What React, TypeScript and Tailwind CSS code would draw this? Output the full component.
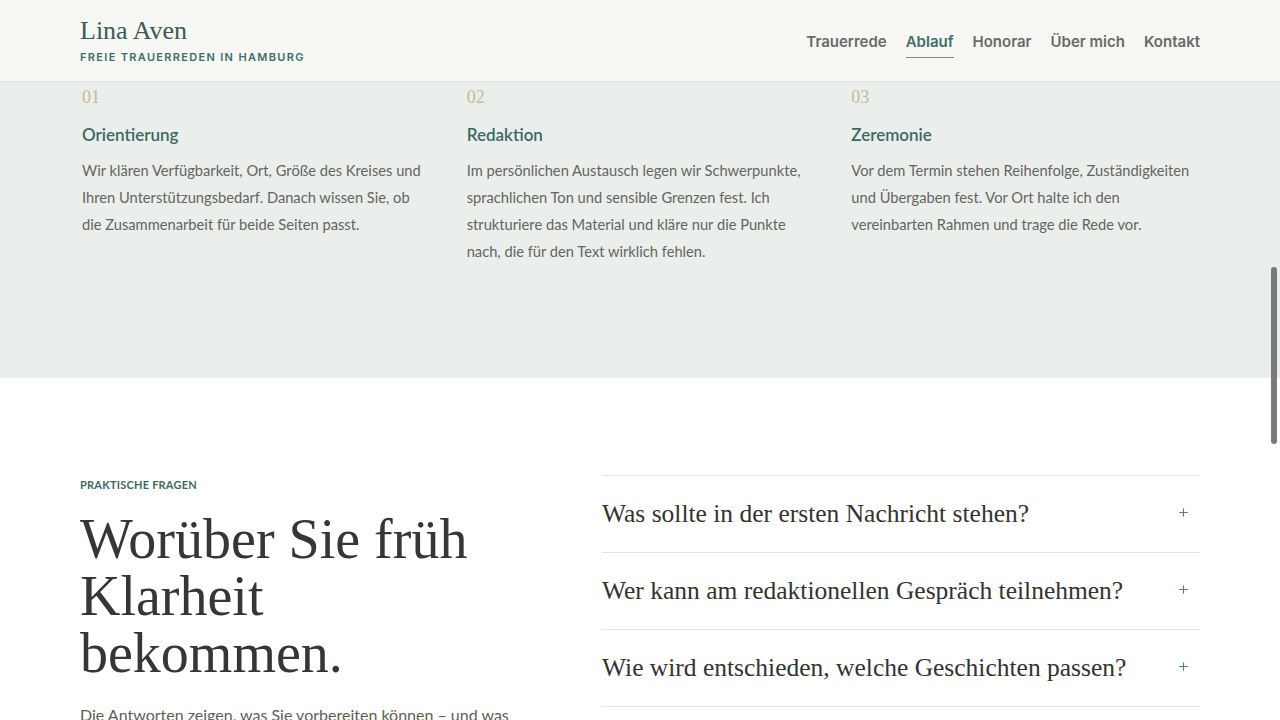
import { Plus } from "lucide-react";

const steps = [
  {
    no: "01",
    title: "Orientierung",
    lines: [
      "Wir klären Verfügbarkeit, Ort, Größe des Kreises und",
      "Ihren Unterstützungsbedarf. Danach wissen Sie, ob",
      "die Zusammenarbeit für beide Seiten passt.",
    ],
  },
  {
    no: "02",
    title: "Redaktion",
    lines: [
      "Im persönlichen Austausch legen wir Schwerpunkte,",
      "sprachlichen Ton und sensible Grenzen fest. Ich",
      "strukturiere das Material und kläre nur die Punkte",
      "nach, die für den Text wirklich fehlen.",
    ],
  },
  {
    no: "03",
    title: "Zeremonie",
    lines: [
      "Vor dem Termin stehen Reihenfolge, Zuständigkeiten",
      "und Übergaben fest. Vor Ort halte ich den",
      "vereinbarten Rahmen und trage die Rede vor.",
    ],
  },
];

const questions = [
  "Was sollte in der ersten Nachricht stehen?",
  "Wer kann am redaktionellen Gespräch teilnehmen?",
  "Wie wird entschieden, welche Geschichten passen?",
];

const nav = ["Trauerrede", "Ablauf", "Honorar", "Über mich", "Kontakt"];

export default function App() {
  return (
    <div className="h-screen overflow-hidden bg-white font-['Lato','Noto_Sans',sans-serif] relative">
      <header className="h-[82px] bg-[#f7f7f3] border-b border-[#e4e7e3]">
        <div className="max-w-[1120px] mx-auto h-full flex items-center justify-between">
          <div className="pt-[1px]">
            <div className="font-['Liberation_Serif',serif] text-[26px] leading-[30px] text-[#3e5957]">
              Lina Aven
            </div>
            <div className="mt-[3px] font-['Inter',sans-serif] text-[11px] font-semibold tracking-[0.12em] text-[#3f6e6c]">
              FREIE TRAUERREDEN IN HAMBURG
            </div>
          </div>
          <nav className="flex items-center gap-[19px] pt-[3px] font-['Inter',sans-serif] text-[15px] font-semibold">
            {nav.map((n) => (
              <a
                key={n}
                className={
                  n === "Ablauf"
                    ? "text-[#3f6e6c] border-b border-[#6e9492] pb-[4px] pt-[5px]"
                    : "text-[#6a6a66] pb-[4px] pt-[5px] border-b border-transparent"
                }
              >
                {n}
              </a>
            ))}
          </nav>
        </div>
      </header>

      <section className="h-[296px] bg-[#eaefec]">
        <div className="max-w-[1120px] mx-auto pl-[2px] grid grid-cols-3 gap-x-[36px] pt-[3px]">
          {steps.map((s) => (
            <div key={s.no}>
              <div className="font-['Liberation_Serif',serif] text-[18px] leading-[24px] text-[#c8b898]">
                {s.no}
              </div>
              <h3 className="mt-[14px] text-[17px] leading-[24px] font-semibold text-[#3d6866]">
                {s.title}
              </h3>
              <p className="mt-[10px] text-[14.7px] leading-[27px] text-[#66645f] whitespace-nowrap">
                {s.lines.map((l, i) => (
                  <span key={i} className="block">
                    {l}
                  </span>
                ))}
              </p>
            </div>
          ))}
        </div>
      </section>

      <section className="max-w-[1120px] mx-auto pt-[97px] grid grid-cols-[minmax(0,1fr)_598px] gap-x-[72px]">
        <div className="pt-[3px]">
          <div className="text-[11px] leading-[14px] font-bold tracking-[0.02em] text-[#3d6866]">
            PRAKTISCHE FRAGEN
          </div>
          <h2 className="mt-[19px] font-['Liberation_Serif',serif] text-[56px] leading-[57px] text-[#383532]">
            Worüber Sie früh Klarheit bekommen.
          </h2>
          <p className="mt-[19px] text-[16px] leading-[27px] text-[#5f5d58]">
            Die Antworten zeigen, was Sie vorbereiten können – und was
          </p>
        </div>
        <div className="border-t border-[#e2e4e1]">
          {questions.map((q) => (
            <div
              key={q}
              className="h-[77px] border-b border-[#e2e4e1] flex items-center justify-between pr-[10px]"
            >
              <span className="font-['Liberation_Serif',serif] text-[25.5px] text-[#34322f]">{q}</span>
              <Plus className="w-[13px] h-[13px] text-[#4f7f7c] mb-[4px]" strokeWidth={2} />
            </div>
          ))}
        </div>
      </section>

      <div className="fixed right-[3px] top-[267px] w-[6px] h-[177px] rounded-full bg-[#7a7a78]" />
    </div>
  );
}
